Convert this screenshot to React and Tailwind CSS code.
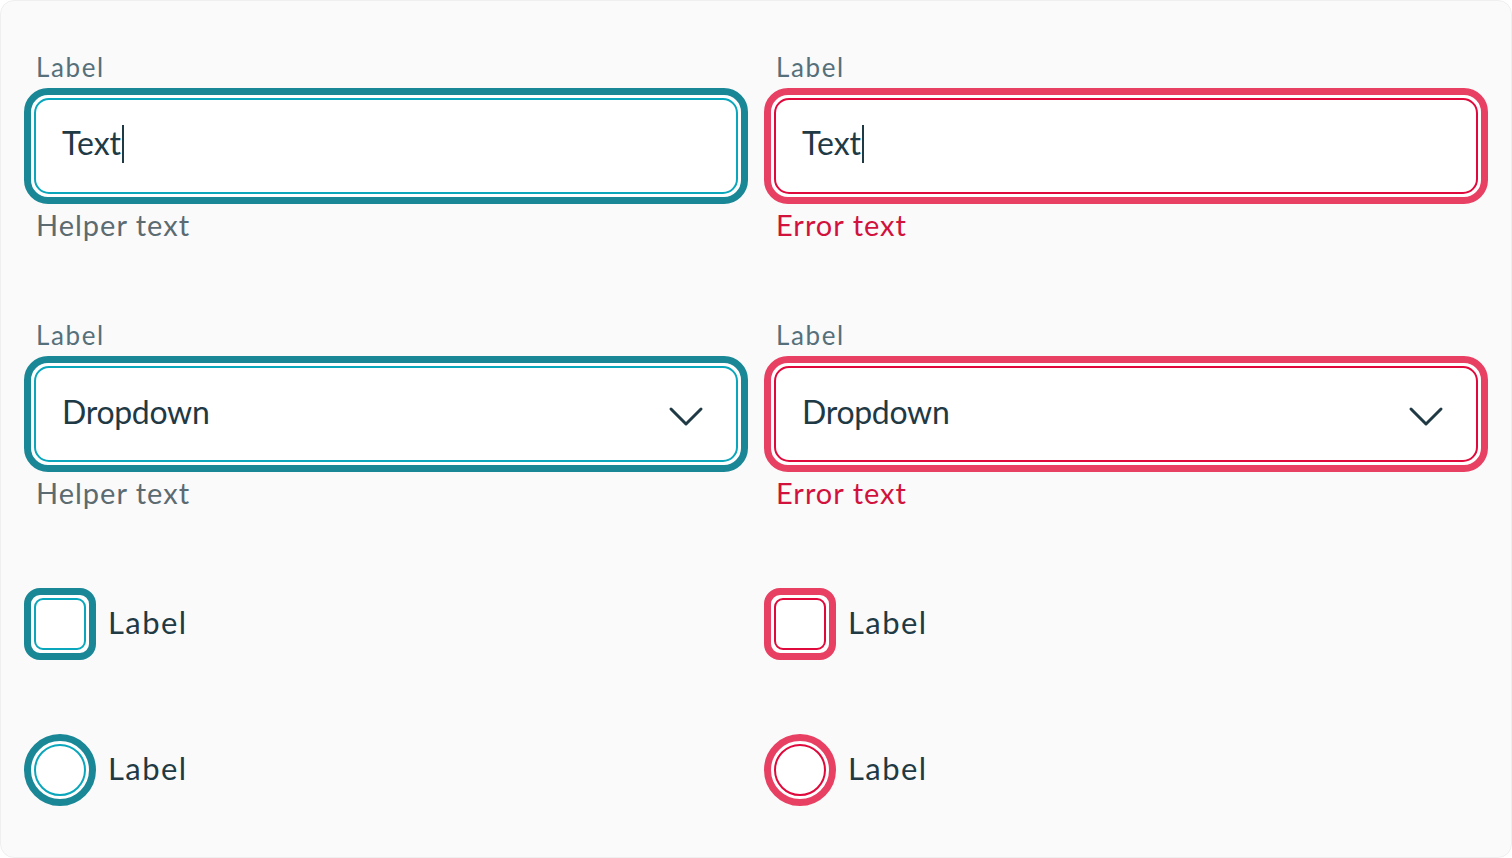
import React from 'react';

const FONT = { fontFamily: 'Lato, "Noto Sans", sans-serif' };

const TONES = {
  ok: {
    outer: 'border-[#1a8796]',
    inner: 'border-[#0aa6bb]',
    help: 'text-[#5b6b71]',
    helpText: 'Helper text',
  },
  error: {
    outer: 'border-[#e84062]',
    inner: 'border-[#e0093b]',
    help: 'text-[#d1123d]',
    helpText: 'Error text',
  },
};

function Chevron() {
  return (
    <svg width="36" height="22" viewBox="0 0 36 22" fill="none" aria-hidden="true" className="mt-[5px]">
      <path d="M3 3l15 15L33 3" stroke="#1f3a45" strokeWidth="3" strokeLinecap="round" strokeLinejoin="round" />
    </svg>
  );
}

function Field({ tone, kind }) {
  const t = TONES[tone];
  return (
    <div className="flex flex-col">
      <div className="text-[26px] leading-[34px] tracking-[1.6px] text-[#55707a] pl-[12px] mb-[4px]">Label</div>
      <div className={`h-[116px] rounded-[24px] border-[7px] ${t.outer} bg-white p-[3px]`}>
        <div className={`h-full rounded-[15px] border-2 ${t.inner} flex items-center pl-[26px] pr-[32px]`}>
          {kind === 'text' ? (
            <span className="text-[32px] text-[#1f3a45] flex items-center mb-[6px]">
              Text
              <span className="inline-block w-[2px] h-[38px] bg-[#1f3a45] ml-[1px] mt-[2px]" />
            </span>
          ) : (
            <>
              <span className="text-[32px] text-[#1f3a45] flex-1 tracking-[-0.3px] mb-[5px]">Dropdown</span>
              <Chevron />
            </>
          )}
        </div>
      </div>
      <div className={`text-[29px] leading-[36px] tracking-[1px] ${t.help} pl-[12px] mt-[3px]`}>{t.helpText}</div>
    </div>
  );
}

function Check({ tone, round }) {
  const t = TONES[tone];
  return (
    <div className="flex items-center gap-[12px]">
      <div
        className={`w-[72px] h-[72px] border-[7px] ${t.outer} bg-white p-[3px] ${round ? 'rounded-full' : 'rounded-[16px]'}`}
      >
        <div className={`w-full h-full border-2 ${t.inner} ${round ? 'rounded-full' : 'rounded-[9px]'}`} />
      </div>
      <span className="text-[31px] tracking-[1.4px] text-[#1f3a45] mb-[3px]">Label</span>
    </div>
  );
}

export default function App() {
  return (
    <div className="w-[1512px] h-[858px] bg-white" style={FONT}>
      <div className="h-full rounded-[14px] border border-[#efefef] bg-[#fafafa] px-[23px] pt-[49px]">
        <div className="grid grid-cols-2 gap-4">
          <Field tone="ok" kind="text" />
          <Field tone="error" kind="text" />
        </div>
        <div className="grid grid-cols-2 gap-4 mt-[75px]">
          <Field tone="ok" kind="dropdown" />
          <Field tone="error" kind="dropdown" />
        </div>
        <div className="grid grid-cols-2 gap-4 mt-[77px]">
          <Check tone="ok" />
          <Check tone="error" />
        </div>
        <div className="grid grid-cols-2 gap-4 mt-[74px]">
          <Check tone="ok" round />
          <Check tone="error" round />
        </div>
      </div>
    </div>
  );
}
